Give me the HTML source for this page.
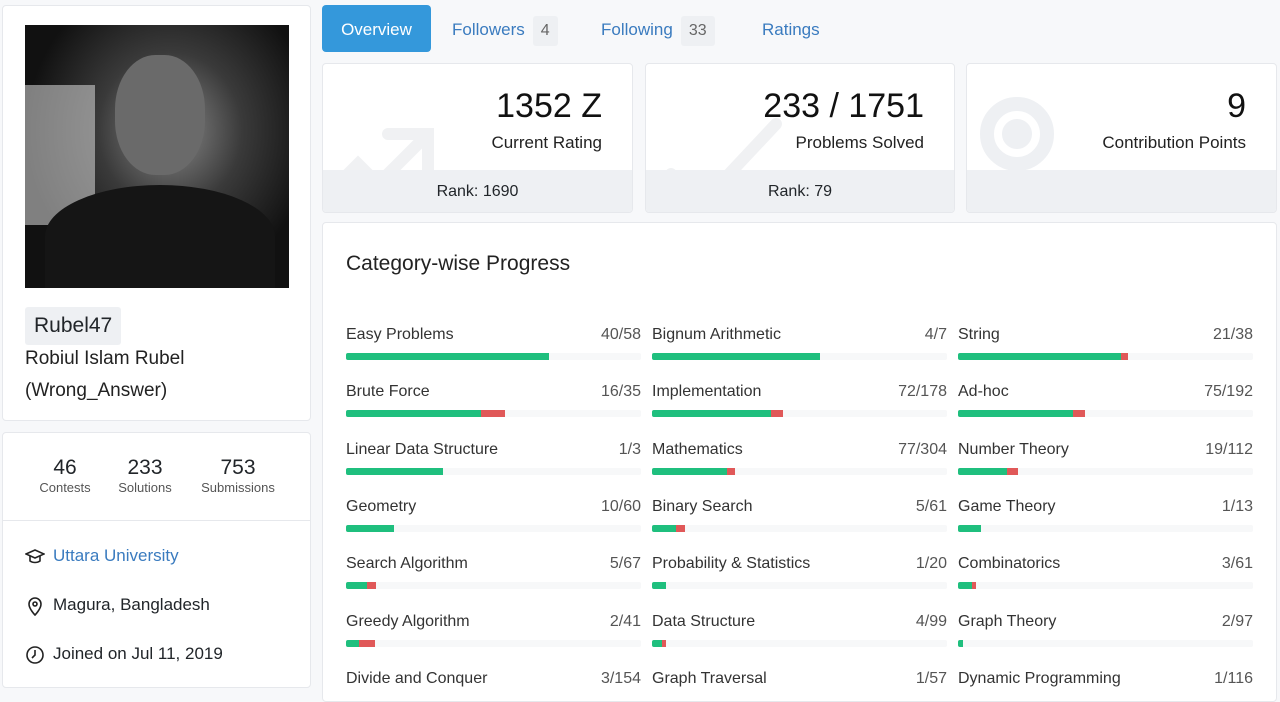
<!DOCTYPE html><html><head><style>
*{box-sizing:border-box;margin:0;padding:0}
body{width:1280px;height:691px;overflow:hidden;background:#f7f8fa;font-family:"Liberation Sans",sans-serif;color:#212529;position:relative}
.card{position:absolute;background:#fff;border:1px solid #e6e8ec;border-radius:4px;overflow:hidden}
.abs{position:absolute}
.tab{position:absolute;top:5px;height:47px;line-height:49px;font-size:17px;color:#3a7bbf}
.badge{display:inline-block;background:#eef0f3;color:#666;border-radius:3px;padding:0 8px;line-height:30px;margin-left:8px;font-size:16px}
.stat .num{position:absolute;right:30px;top:23px;font-size:34px;color:#111}
.stat .lbl{position:absolute;right:30px;top:69px;font-size:17px;color:#222}
.stat .foot{position:absolute;left:0;right:0;bottom:0;height:42px;background:#eef0f3;text-align:center;line-height:44px;font-size:16px}
.it{position:absolute;width:295px;font-size:16px;color:#333}
.it .r{position:absolute;right:0;top:0;color:#555}
.bar{position:absolute;top:27px;left:0;width:295px;height:7px;background:#f7f8f9;border-radius:2px;overflow:hidden}
.g{position:absolute;top:0;height:7px;background:#1fbf7e}
.rd{position:absolute;top:0;height:7px;background:#e05858}
</style></head><body>
<div class="card" style="left:2px;top:5px;width:309px;height:416px">
 <div class="abs" style="left:22px;top:19px;width:264px;height:263px;background:radial-gradient(ellipse at 55% 40%,#8a8a8a 0%,#3a3a3a 35%,#111 70%);">
  <div class="abs" style="left:0;top:60px;width:70px;height:140px;background:#ccc;opacity:.6"></div>
  <div class="abs" style="left:90px;top:30px;width:90px;height:120px;border-radius:45%;background:#6a6a6a"></div>
  <div class="abs" style="left:20px;top:160px;width:230px;height:103px;border-radius:50% 50% 0 0;background:#151515"></div>
 </div>
 <div class="abs" style="left:22px;top:301px;background:#eef0f3;border-radius:3px;padding:0 9px;font-size:21px;line-height:38px">Rubel47</div>
 <div class="abs" style="left:22px;top:337px;font-size:19px;line-height:32px;color:#222">Robiul Islam Rubel<br>(Wrong_Answer)</div>
</div>
<div class="card" style="left:2px;top:432px;width:309px;height:256px">
 <div class="abs" style="left:0;top:23px;width:309px;height:44px">
  <div class="abs" style="left:20px;width:84px;text-align:center"><div style="font-size:21px">46</div><div style="font-size:13px;color:#555">Contests</div></div>
  <div class="abs" style="left:103px;width:78px;text-align:center"><div style="font-size:21px">233</div><div style="font-size:13px;color:#555">Solutions</div></div>
  <div class="abs" style="left:190px;width:90px;text-align:center"><div style="font-size:21px">753</div><div style="font-size:13px;color:#555">Submissions</div></div>
 </div>
 <div class="abs" style="left:0;top:87px;width:309px;border-top:1px solid #e6e8ec"></div>
 <svg class="abs" style="left:22px;top:114px" width="20" height="20" viewBox="0 0 20 20" fill="none" stroke="#222" stroke-width="1.6"><path d="M1 7l9-4 9 4-9 4z"/><path d="M5 9v5c3 2 7 2 10 0V9"/></svg>
 <div class="abs" style="left:50px;top:113px;font-size:17px;color:#3a7bbf">Uttara University</div>
 <svg class="abs" style="left:22px;top:163px" width="20" height="20" viewBox="0 0 20 20" fill="none" stroke="#222" stroke-width="1.6"><path d="M10 19s6-6 6-11a6 6 0 0 0-12 0c0 5 6 11 6 11z"/><circle cx="10" cy="8" r="2"/></svg>
 <div class="abs" style="left:50px;top:162px;font-size:17px">Magura, Bangladesh</div>
 <svg class="abs" style="left:22px;top:212px" width="20" height="20" viewBox="0 0 20 20" fill="none" stroke="#222" stroke-width="1.6"><circle cx="10" cy="10" r="8"/><path d="M10 5v5l-3 3"/></svg>
 <div class="abs" style="left:50px;top:211px;font-size:17px">Joined on Jul 11, 2019</div>
</div>
<div class="abs" style="left:322px;top:5px;width:109px;height:47px;background:#3498db;border-radius:4px;color:#fff;font-size:17px;line-height:49px;text-align:center">Overview</div>
<div class="tab" style="left:452px">Followers<span class="badge">4</span></div>
<div class="tab" style="left:601px">Following<span class="badge">33</span></div>
<div class="tab" style="left:762px">Ratings</div>
<div class="card stat" style="left:322px;top:63px;width:311px;height:150px">
 <svg class="abs" style="left:0;top:60px" width="120" height="90" viewBox="0 0 120 90" fill="none" stroke="#f0f1f3" stroke-width="12" stroke-linecap="round"><path d="M5 70l30-30 20 20 50-50M65 10h40v40"/></svg>
 <div class="num">1352 Z</div><div class="lbl">Current Rating</div><div class="foot">Rank: 1690</div></div>
<div class="card stat" style="left:645px;top:63px;width:310px;height:150px">
 <svg class="abs" style="left:20px;top:50px" width="120" height="100" viewBox="0 0 120 100" fill="none" stroke="#f0f1f3" stroke-width="12" stroke-linecap="round"><path d="M5 60l30 30 75-80"/></svg>
 <div class="num">233 / 1751</div><div class="lbl">Problems Solved</div><div class="foot">Rank: 79</div></div>
<div class="card stat" style="left:966px;top:63px;width:311px;height:150px">
 <svg class="abs" style="left:10px;top:30px" width="100" height="120" viewBox="0 0 100 120" fill="none" stroke="#eef0f3" stroke-width="14"><circle cx="40" cy="40" r="30"/><circle cx="40" cy="40" r="8" fill="#eef0f3"/></svg>
 <div class="num">9</div><div class="lbl">Contribution Points</div><div class="foot"></div></div>
<div class="card" style="left:322px;top:222px;width:955px;height:480px">
 <div class="abs" style="left:23px;top:29px;font-size:21px;color:#222">Category-wise Progress</div>
</div>
<div id="grid"></div>
<script>
var d=[
[["Easy Problems","40/58",549,0],["Brute Force","16/35",481,505],["Linear Data Structure","1/3",443,0],["Geometry","10/60",394,0],["Search Algorithm","5/67",367,376],["Greedy Algorithm","2/41",359,375],["Divide and Conquer","3/154",0,0]],
[["Bignum Arithmetic","4/7",820,0],["Implementation","72/178",771,783],["Mathematics","77/304",727,735],["Binary Search","5/61",676,685],["Probability &amp; Statistics","1/20",666,0],["Data Structure","4/99",662,666],["Graph Traversal","1/57",0,0]],
[["String","21/38",1121,1128],["Ad-hoc","75/192",1073,1085],["Number Theory","19/112",1007,1018],["Game Theory","1/13",981,0],["Combinatorics","3/61",972,976],["Graph Theory","2/97",963,0],["Dynamic Programming","1/116",0,0]]];
var xs=[346,652,958],h="";
d.forEach(function(c,i){c.forEach(function(r,j){var x=xs[i],y=326+j*57.3;
h+='<div class="it" style="left:'+x+'px;top:'+y+'px">'+r[0]+'<span class="r">'+r[1]+'</span>';
if(r[2]){h+='<div class="bar"><div class="g" style="left:0;width:'+(r[2]-x)+'px"></div>';if(r[3])h+='<div class="rd" style="left:'+(r[2]-x)+'px;width:'+(r[3]-r[2])+'px"></div>';h+='</div>';}
h+='</div>';});});
document.getElementById('grid').innerHTML=h;
</script>
</body></html>
